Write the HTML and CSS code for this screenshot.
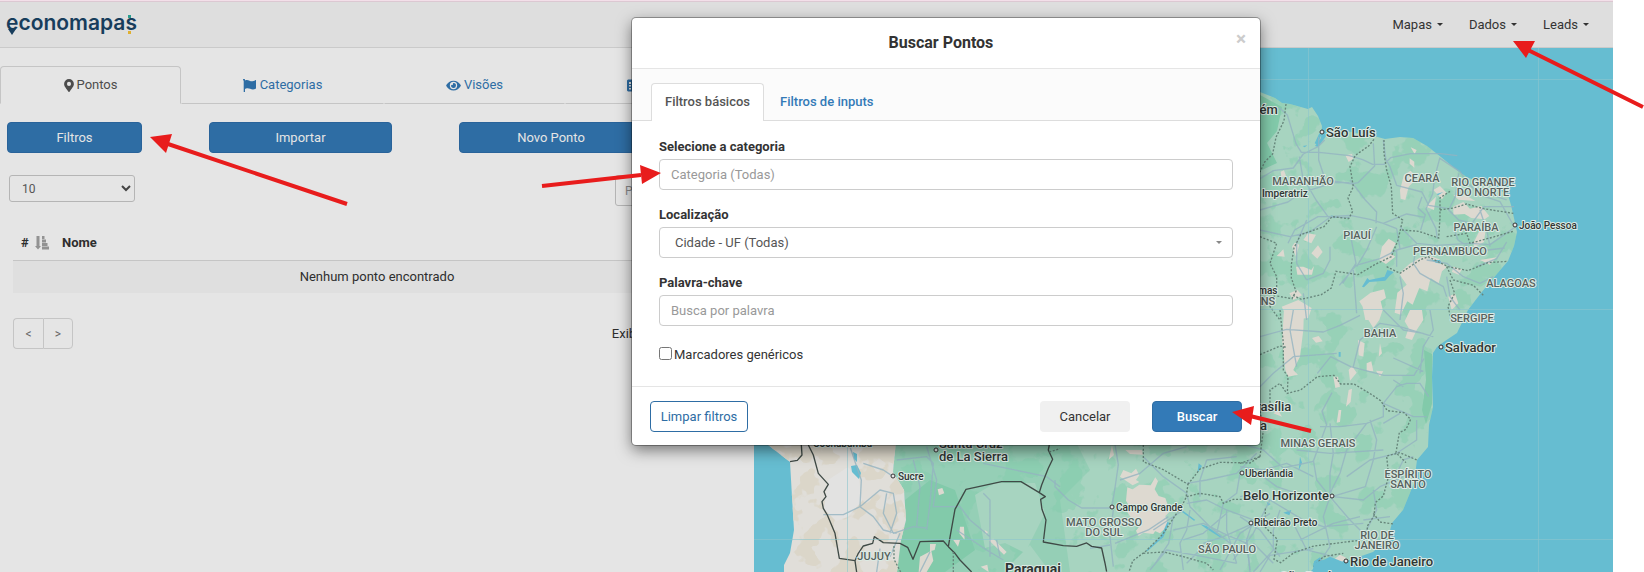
FILE: index.html
```html
<!DOCTYPE html>
<html lang="pt-BR">
<head>
<meta charset="utf-8">
<title>Economapas</title>
<link rel="stylesheet" href="styles.css">
</head>
<body>
<div class="app">
  <header class="navbar">
    <a class="brand" href="#" aria-label="economapas">
      <svg width="140" height="28" viewBox="0 0 140 28">
        <text class="brand-text" x="0" y="19">economapas</text>
        <path d="M2 18h8l-4 6z" fill="#173d5c"/>
        <path d="M122 4h3v3h-3z" fill="#2a9d8f"/>
        <path d="M122 20h3v3h-3z" fill="#e0b030"/>
      </svg>
    </a>
    <nav class="menu">
      <a href="#">Mapas <span class="caret"></span></a>
      <a href="#">Dados <span class="caret"></span></a>
      <a href="#">Leads <span class="caret"></span></a>
    </nav>
  </header>

  <main class="workspace">
    <section class="panel">
      <nav class="tabs">
        <a class="tab active" href="#"><svg width="10" height="13" viewBox="0 0 384 512"><path fill="currentColor" fill-rule="evenodd" d="M172 502C27 291 0 269 0 192a192 192 0 0 1 384 0c0 77-27 99-172 310a24 24 0 0 1-40 0zM192 272a80 80 0 1 0 0-160 80 80 0 0 0 0 160z"/></svg> Pontos</a>
        <a class="tab" href="#"><svg width="14" height="13" viewBox="0 0 14 13"><path fill="currentColor" d="M0 1a1 1 0 0 1 2-.3V1.400C5-.2 7 2.600 9.500 2.200 11 2 12 1.300 13 1v8.500c-4 2.400-6-.6-9-.2-.8.100-1.400.4-2 .7v3H.700V1.800z"/></svg> Categorias</a>
        <a class="tab" href="#"><svg width="15" height="13" viewBox="0 0 576 512"><path fill="currentColor" fill-rule="evenodd" d="M572 241C518 136 411 64 288 64S58 136 4 241a32 32 0 0 0 0 30c54 105 161 177 284 177s230-72 284-177a32 32 0 0 0 0-30zM288 400a144 144 0 1 1 0-288 144 144 0 0 1 0 288zm0-240a95 95 0 0 0-25 4 48 48 0 0 1-67 67 96 96 0 1 0 92-71z"/></svg> Visões</a>
        <a class="tab" href="#"><svg width="13" height="13" viewBox="0 0 13 13"><path fill="currentColor" fill-rule="evenodd" d="M1 .5h11l1 1v10l-1 1H1l-1-1v-10zM2 3v2h2V3zm3 0v1.500h6V3zM2 6v1.500h2V6zm3 0v1.500h6V6zM2 9v1.500h2V9zm3 0v1.500h6V9z"/></svg> Campos</a>
      </nav>
      <div class="actions">
        <button class="btn solid" type="button">Filtros</button>
        <button class="btn solid" type="button">Importar</button>
        <button class="btn solid" type="button">Novo Ponto</button>
      </div>
      <div class="list-tools">
        <div class="page-size">
          <select aria-label="Itens por página"><option>10</option></select>
          <svg width="10" height="7" viewBox="0 0 10 7"><path d="M1 1l4 4 4-4" fill="none" stroke="#444" stroke-width="2"/></svg>
        </div>
        <input class="search" type="text" placeholder="Pesquisar" aria-label="Pesquisar">
      </div>
      <table class="points">
        <thead>
          <tr>
            <th class="num"># <svg width="14" height="14" viewBox="0 0 14 14"><path fill="#929292" d="M1.500 0h3v10H6l-3 3.500L0 10h1.500zM7 0h2.500v3H7zM7 3.500h4V6.500H7zM7 7h5.500v3H7zM7 10.500h7V13.500H7z"/></svg></th>
            <th>Nome</th>
          </tr>
        </thead>
        <tbody>
          <tr><td colspan="2">Nenhum ponto encontrado</td></tr>
        </tbody>
      </table>
      <div class="pager">
        <div class="pages">
          <button type="button">&lt;</button><button type="button">&gt;</button>
        </div>
        <span class="summary">Exibindo 0 registros</span>
      </div>
    </section>

    <section class="map">
      <svg viewBox="754 48 859 524" preserveAspectRatio="xMinYMin slice">
        <defs>
          <clipPath id="east">
            <path d="M897 430L1200 80 1260 92 1275 98 1282 103 1290 104 1308 109 1312 107 1318 116 1322 126 1321 138 1315 146 1318 147 1324 139 1328 133 1345 131 1374 136 1385 139 1400 137 1413 138 1427 146 1441 157 1458 171 1468 178 1490 184 1508 195 1511 205 1514 218 1517 232 1514 246 1508 261 1496 275 1481 293 1468 310 1457 333 1445 341 1437 347 1433 353 1432 377 1433 407 1429 425 1428 447 1417 460 1414 483 1403 510 1392 523 1388 538 1373 552 1350 560 1333 561 1318 564 1310 572 895 572 901 540 906 520 904 490 893 472z"/>
          </clipPath>
          <clipPath id="andes">
            <path d="M754 430L897 430 893 472 904 490 906 520 901 540 897 572 784 572 784 565 790 553 794 530 792 497 790 462 768 445z"/>
          </clipPath>
          <filter id="forest" x="0" y="0" width="100%" height="100%" color-interpolation-filters="sRGB">
            <feTurbulence type="fractalNoise" baseFrequency=".035" numOctaves="4" seed="8"/>
            <feColorMatrix values="0 0 0 0 .5  0 0 0 0 .8  0 0 0 0 .67  22 0 0 0 -12"/>
          </filter>
          <filter id="dry" x="0" y="0" width="100%" height="100%" color-interpolation-filters="sRGB">
            <feTurbulence type="fractalNoise" baseFrequency=".05" numOctaves="3" seed="21"/>
            <feColorMatrix values="0 0 0 0 .86  0 0 0 0 .84  0 0 0 0 .79  22 0 0 0 -11"/>
          </filter>
        </defs>
        <rect class="sea" x="0" y="0" width="1700" height="600"/>
        <g clip-path="url(#east)">
          <rect class="land" x="880" y="60" width="680" height="520"/>
          <path class="wood" d="M890 430h180l20 40-30 30 10 72H890z"/>
          <rect x="890" y="80" width="640" height="492" filter="url(#forest)" opacity=".4"/>
          <path class="forest" d="M1260 95l22 12-5 24-10 12 10 20-17 8zM1424 350l8 4v50l-6 20-4-14 4-30z M905 500l25-20 25 10 20 60-30 22h-48z"/>
          <path class="land" d="M975 495l20-12 40 0 10 30-20 40-20-10-20 5zM1010 565l20-20 20 27z"/>
        </g>
        <g clip-path="url(#andes)">
          <rect class="plateau" x="750" y="430" width="160" height="150"/>
          <rect x="760" y="440" width="150" height="132" filter="url(#dry)"/>
          <path class="pale" d="M828 480l20-13 11 12 3 22-14 16-12 4-12-12z"/>
          <path class="sea" d="M851 466l6-1 4 8-2 6-7-7zM853 452l4 2v8l-3-3z"/>
        </g>

        <!-- dry clearings, north-east -->
        <g transform="translate(1240 80) scale(.3333)">
          <path class="sand" d="M512 202l18 8-6 12zM509 235l14 10v18l-14-12zM316 226l20-4 4 14-14 10zM480 330l12-46 20-12 12 12-4 22-14 14-10 40-14-4zM580 330l20-12 20 20-14 20zM558 380l30-30-6 40zM640 380l30-14 20 20 34-8 24 30-14 10-40-4-20-12-34 2zM700 490l20-40 16 6-4 30-30 16zM426 500l20-24 22 14-16 30 14 10-28 22-20-12zM478 580l30-28 34-20 30-4 26 10 22 24-14 12-10 36-24-16-10 40-24-10-20 50-16-10-20 40-18-6 8-60 28-24-14-20zM358 664l34-26 40-10 6 26-16 10 6 24-18 32h-34l-8-40zM625 650l20-10 10 30-20 20zM640 560l26 8-10 16-20-8zM720 540l50-8-20 22zM125 680l50-20 40 24-10 30-60 6zM148 640l24-10 14 16-26 14zM122 275l10-4 6 16-14 6zM156 500l8-12 14 6-10 36zM110 528l20-20 4 22zM190 480l14-20 24 4-14 26zM214 520l20-24 14 20-16 20zM168 560l22 0 24 10 8-12-6 26-44 0zM640 345l36 0 30 18-50-4z"/>
          <path class="water" d="M366 620l16-26 6 6 46-10 8-20 20 6-14 12-12 14-48 4-16 16zM224 190l14-30 6 4-12 30zM188 198l14-2-8 6zM590 342l20-6-16 10zM556 530l20 10 24 0 8 12-20-4zM272 406l20 6-10 3z"/>
          <path class="road" d="M60 85l60 0 22 20 26 86 16 26 54 0 90 10 40 12 30 14 34 0 20-20 60-12 90 0 50 6M60 296l40-24 60-8 30-42 44-22 20-20M236 170l0 70 20 60 84 12M60 390l84-24 40-28 100-30 44 0M178 230l10 60 40 70 36 50 66-4 60 12 40 12 70-28 54 10M400 190l4 68-50 50-20 4M330 300l46 60 34 36-2 34M60 450l90 20 60-14 60-44 60 0M144 490l20-40 70-40 40 0M430 180l8 60 12 20 20 56 76 20 20 40 60 10M600 232l-16 60-6 50-20 44 30 60 4 30M546 350l-12 34 22 20-14 46M600 235l60 40 20 30 40 40 60 20 40 70M656 280l-10 70-20 40 30 30 40 10 36-50 90 0M430 430l40 16 10 60-60 30-72 20-50 60M334 480l14 70-40 60M410 440l-30 70-30 50M480 440l50 50 60 6 100-6 60 4 80-56M470 560l0-50 60-16M530 500l-10 50 20 30 70 40 10 30M480 590l10 50-10 80M560 540l60 10 50 40 50 20 40-20M640 440l14 40 30 20 60 10 50-6M720 390l20 60 10 50M710 560l60-24 30-50M200 600l-30-50 0-60 30-70M200 600l50-20 20-40 0-40M340 570l10 130M190 640l10 80M620 590l10 60 30 40M740 340l60 20"/>
          <path class="border" d="M138 72l-6 50-24 50-10 50-24 24-14 30M402 178l-16 20-40 28-16 34 10 60-16 34 14 40-12 22-50-6-24 30-70 24-20 40-8 50 0 40 14 40-12 22-46-8M432 180l0 40 8 50 14 50 4 80 30 20-14 60-20 50-50 24-50 30-66-10-14 50-30 20-60 14-30-14M486 450l50 4 60 20 4-60 0-60 30-20M600 390l40-6 40-12 50 14 90 14M620 470l60-10 10 30 60-16 70-20M440 560l40 20 60-40 24-10 60 30 60 12 60-24 60-4M620 560l20 40 60 16 30 30M630 600l14 40-20 40 10 40M60 470l50 20-20 60 20 40 0 40-20 50 30 40"/>
        </g>

        <!-- centre and south-east -->
        <g transform="translate(1240 310) scale(.3333)">
          <path class="sand" d="M132 0l60 0-2 60-10 80-20 40 14 14-30 6-8-20-10-90zM372 0l56 0-10 30-18 24-16-26zM510 0l36 0 4 30-20 30-14 30-20-6 10-30-12-20zM354 90l20 10-4 40-14-4zM420 100l6 30-10 10zM380 160l14-6 6 30-20-2zM326 180l10-12 14 20-20 24zM408 182l22 2-10 16zM280 200l14 0 6 30-14 4zM326 240l10-4-4 40-14 14zM296 300l8 0-4 36-10 2zM100 310l14-10 12 20zM216 84l20-6 12 16-20 4zM280 750l20-16 20 10-16 14z"/>
          <path class="water" d="M180 440l6 18-10 24zM130 608l24-8-6 16zM80 576l12 6-8 5zM296 126l6 0 0 14-6 0zM222 754l18-12 16 20 30 6 4 18h-70z"/>
          <path class="road" d="M60 80l80-22 110 8 50-20 60-30M60 230l40-40 60-50 130-10M0 400l70 20 60 54 90-20 40-110-14-40 30-56M160 0l-10 60 20 110M232 190l40-50 60 30 100 26 90 0 30-50M340 170l20-80 60-50 60 10 100 30M430 0l60 60 60 10M570 0l10 60-30 50-10 80M460 144l90 40M430 280l40-50 30-10 40 0 26 40M430 280l90 40 40 0M430 280l0 40-50 20-80 10-60 0M490 230l-30-20M430 340l50-30M390 330l20 60-10 60-24 80-100 30M270 340l10 90-10 60 0 70M220 450l10 60 40 50M380 340l-60 80-20 70-30 60M430 420l-160 10-100-10M530 330l0 60-60 40-80 20-70 50M0 470l70 10 70-20 80 40M70 500l40 30 60 20 100 6M0 560l50-10 40 20 100 60 60 20 120-10M270 560l-20 60 20 90-40 60M270 560l60 70 60 60M280 560l90 10 50-40 70-30M400 540l10 60-30 60M120 600l-20 60 0 60-60 66M90 570l-50 100-60 80M0 620l60 40 60 80M60 786l30-50 130-20M160 640l40 80 80 20M30 786l-10-100M180 690l100-50 80-20M460 510l30-60 30-10M370 630l80-10"/>
          <path class="border" d="M60 134l60-26 20 4M120 0l10 100 0 80 14 20-2 50 40-10 50-40 50-4 20 26 40 0 50 30 30 20 20 30 50 6 20 20-14 30-20 10-10 60 30 30M530 450l-50-22-40 10 6 60-16 60-24 20-4 40-20 30 0 40-160 20-60 20-40 30-20-10 10-60-36-36 0-60M400 610l20 26 40 6M90 300l0-60 30-20 20 30M60 440l10-80-10-60M0 460l60-20M220 770l30-30 60-10"/>
        </g>

        <!-- south -->
        <g transform="translate(1040 430) scale(.3333)">
          <path class="sand" d="M250 120l24 10 14-14 10 20-10 14 10 6-20 10-20-14-18-12zM262 172l16 6 20-14 34 2 14-24 8 12-10 24 12 20 20 6 14 40-14 14 10 30-20 16-16-8-10 16-30-4-14 10-8-16 14-18-24-14-20-30 8-14-8-14zM296 270l20 4 16 14 24-10 14 22-10 10-30-14-24 4zM256 60l50 0 4 14-40-2zM216 45l6 30-16 14z"/>
          <path class="water" d="M318 362l44-42 20-44 6 2-18 44-26 22-22 20zM480 282l20 6 44 32-4 2-44-28zM426 240l40 30-4 2-36-26zM472 130l4-30 10 8zM820 400l30-10 20-10 40 16 50-4v34H820z"/>
          <path class="road" d="M45 150l0 20 40 40 40 24 90 0 10-60 10-70-10-60M240 150l60-20 70-60 70-20M220 240l-10 80 10 90M210 345l-60 10M225 340l100-40 60-40M310 80l60 60 70 50 10 40 60 60 60 50M440 220l60-10 60 30 80 30M400 260l-14 80-40 60M450 240l-10 60-20 40 10 80M400 300l90-20 60 30 70 30M430 330l60-20 70-60M560 240l0 60 30 100M600 130l-10 60-40 30-20 90M640 270l-20 60 10 90M440 160l60-10 90-20 60-60M500 90l-20 60 0 50M500 90l90-10M340 300l90-60M540 420l60-110 90-60M490 340l60-20 90-40M440 400l50-50M640 340l60 60M330 420l50-60 110 20 100 20"/>
          <path class="border" d="M310 45l0 50 60 24 74 44-6 40-10 20-60 90-50 50-40 30-10 30M310 370l60-4 60 14 70 20 20 20M444 163l36-46 60-20 90 2 34-22M440 200l40-10 60 10 10 20 30-12 80 0"/>
        </g>

        <!-- Bolivia, Chile and Paraguay -->
        <g transform="translate(740 430) scale(.3333)">
          <path class="sand" d="M593 178l14-4 6 16-16 6zM570 342l18 0-4 18-14 4zM540 380l34-18 6 30-20 34h-24zM660 290l12 0 2 40-16-20zM640 330l20 0-6 20zM746 330l14-4 40 40-8 8zM734 300l10 6-6 10zM722 410l20-6 4 22z"/>
          <path class="road" d="M330 50l20 60 14 40-4 80-50 24-60 0M360 230l40 30 30 40 40 10M370 100l60 20 30 20M360 230l60-50 40 10 10 60-20 60M440 190l-10 60 30 60 60-20 40 4M470 90l90-10 20 20-10 120-10 80M560 50l30 100-10 80 80 0 30 40 60 50M520 90l20 80-10 120M650 300l90 60 50 30M750 380l0-170-20-20M730 100l190 40M920 140l40 30M770 330l10 50M450 380l30-70M410 426l10-70M540 426l30-60"/>
          <path class="nation" d="M205 45l15 30 15 55 30 33-13 22 6 15-12 15 4 20 12 20 23 55 13 75 47 7 10-22 15-22 28-8 5-20 27 18 50 2 23 12 16 36 21-53 70-2 15 17 20-112 33-60 107-23h58l55 33 7-23 20-50 13-27-13-28 3-15M625 350l20 20 15 20 35 36M898 188l18 12-14 8 4 30 12 32-8 66 60 11 40 2 30-10 15 10 30 5 10 45 5 26M345 392l5 34M150 95l22-4 14-16-2-30"/>
          <path class="border" d="M462 348l0 40 20 38M640 366v60M928 66l32-10"/>
        </g>

        <path class="graticule" d="M754 79.500H1613M754 309.500H1613M754 539.500H1613M847.500 48V572M1308.500 48V572M1538.500 48V572"/>

        <g class="dots">
          <circle cx="1322" cy="132" r="2"/><circle cx="1515" cy="225" r="2"/><circle cx="1441" cy="347" r="2"/><circle cx="1242" cy="473" r="2"/><circle cx="1332" cy="496" r="2"/><circle cx="1251" cy="523" r="2"/><circle cx="1346" cy="561" r="2"/><circle cx="1112" cy="507" r="2"/><circle cx="893" cy="476" r="2"/><circle cx="936" cy="450" r="2"/>
        </g>
        <g class="state">
          <text x="1303" y="185">MARANHÃO</text><text x="1422" y="182">CEARÁ</text>
          <text x="1483" y="186">RIO GRANDE</text><text x="1483" y="196">DO NORTE</text>
          <text x="1357" y="239">PIAUÍ</text><text x="1476" y="231">PARAÍBA</text>
          <text x="1450" y="255">PERNAMBUCO</text><text x="1511" y="287">ALAGOAS</text>
          <text x="1245" y="305">TOCANTINS</text><text x="1472" y="322">SERGIPE</text>
          <text x="1380" y="337">BAHIA</text><text x="1318" y="447">MINAS GERAIS</text>
          <text x="1408" y="478">ESPÍRITO</text><text x="1408" y="488">SANTO</text>
          <text x="1377" y="539">RIO DE</text><text x="1377" y="549">JANEIRO</text>
          <text x="1227" y="553">SÃO PAULO</text><text x="1104" y="526">MATO GROSSO</text>
          <text x="1104" y="536">DO SUL</text><text x="874" y="560">JUJUY</text>
        </g>
        <g class="city">
          <text x="1241" y="114">Belém</text><text x="1326" y="137">São Luís</text>
          <text x="1445" y="352">Salvador</text><text x="1248" y="411">Brasília</text>
          <text x="1223" y="430">Goiânia</text><text x="1243" y="500">Belo Horizonte</text>
          <text x="1350" y="566">Rio de Janeiro</text><text x="1280" y="581">São Paulo</text>
          <text x="939" y="448">Santa Cruz</text><text x="939" y="461">de La Sierra</text>
        </g>
        <g class="town">
          <text x="1262" y="197">Imperatriz</text><text x="1519" y="229">João Pessoa</text>
          <text x="1244" y="294">Palmas</text><text x="1245" y="477">Uberlândia</text>
          <text x="1254" y="526">Ribeirão Preto</text><text x="1116" y="511">Campo Grande</text>
          <text x="898" y="480">Sucre</text><text x="813" y="447">Cochabamba</text>
        </g>
        <text class="country" x="1005" y="574">Paraguai</text>
      </svg>
    </section>
  </main>
</div>

<form class="modal" role="dialog" aria-labelledby="modal-title">
  <header class="modal-head">
    <h1 id="modal-title">Buscar Pontos</h1>
    <button class="close" type="button" aria-label="Fechar">×</button>
  </header>
  <nav class="modal-tabs">
    <a class="active" href="#">Filtros básicos</a>
    <a href="#">Filtros de inputs</a>
  </nav>
  <div class="modal-body">
    <div class="field">
      <label for="category">Selecione a categoria</label>
      <input id="category" type="text" placeholder="Categoria (Todas)">
    </div>
    <div class="field">
      <label for="place">Localização</label>
      <div class="picker">
        <select id="place"><option>Cidade - UF (Todas)</option></select>
        <span class="caret"></span>
      </div>
    </div>
    <div class="field">
      <label for="keyword">Palavra-chave</label>
      <input id="keyword" type="text" placeholder="Busca por palavra">
    </div>
    <label class="check"><input type="checkbox"><span>Marcadores genéricos</span></label>
  </div>
  <footer class="modal-foot">
    <button class="btn outline" type="button">Limpar filtros</button>
    <button class="btn muted" type="button">Cancelar</button>
    <button class="btn primary" type="submit">Buscar</button>
  </footer>
</form>

<svg class="arrows" viewBox="0 0 1644 572" preserveAspectRatio="xMinYMin meet" aria-hidden="true">
  <path class="shaft" d="M168 144L347 204M641 175L542 186M1528 50L1643 107M1250 416L1311 431"/>
  <path class="tip" d="M150 137l22-3-6 19zM661 173l-21-8 2 19zM1513 41h22l-9 17zM1232 412l22-6-3 19z"/>
</svg>
</body>
</html>
```
FILE: styles.css
```css
* { box-sizing: border-box; }

body {
  margin: 0;
  background: #fff;
  color: #2e2e2e;
  font: 13px/18px Roboto, "Liberation Sans", sans-serif;
  overflow: hidden;
}

a { color: #2e6da4; text-decoration: none; }
button, input, select { font: inherit; color: inherit; }

.app {
  display: flex;
  flex-direction: column;
  height: 100vh;
  margin-right: 31px;
  background: #e5e5e5;
  border-top: 1px solid #f3dfe9;
}

.navbar {
  display: flex;
  align-items: center;
  justify-content: space-between;
  height: 47px;
  flex: none;
  padding: 0 24px 0 6px;
  background: #dedede;
  border-top: 1px solid #dcc8d2;
  border-bottom: 1px solid #cacaca;
}
.brand { display: flex; }
.brand-text { font: 600 21px Inter, sans-serif; fill: #173d5c; }
.menu { display: flex; gap: 26px; }
.menu a { display: flex; align-items: center; gap: 5px; color: #333; }

.caret {
  width: 6px;
  border: 3px solid transparent;
  border-top-color: currentColor;
  border-bottom: 0;
}

.workspace {
  display: grid;
  grid-template-columns: 754fr 859fr;
  flex: 1;
  min-height: 0;
}

.panel { padding-top: 18px; min-width: 0; }
.tabs { display: grid; grid-template-columns: 181fr 203fr 181fr 189fr; }
.tab {
  display: flex;
  align-items: center;
  justify-content: center;
  gap: 3px;
  height: 38px;
  border: 1px solid transparent;
  border-bottom-color: #c5c5c5;
}
.tab.active {
  color: #4c4c4c;
  border-color: #c5c5c5;
  border-bottom-color: transparent;
  border-radius: 4px 4px 0 0;
}

.btn {
  height: 31px;
  border: 1px solid transparent;
  border-radius: 4px;
  padding: 0 8px;
  white-space: nowrap;
}
.solid { background: #2e6da4; border-color: #29639a; color: #e5e5e5; }

.actions {
  display: grid;
  grid-template-columns: 135fr 183fr 184fr;
  column-gap: 67px;
  padding: 18px 111px 0 7px;
}

.list-tools {
  display: flex;
  justify-content: space-between;
  align-items: flex-start;
  padding: 22px 13px 0 9px;
  font-size: 12px;
  color: #555;
}
.page-size { display: grid; align-items: center; width: 126px; }
.page-size > * { grid-area: 1 / 1; }
.page-size svg { justify-self: end; margin-right: 4px; pointer-events: none; }
.page-size select {
  appearance: none;
  height: 27px;
  padding: 0 12px;
  border: 1px solid #b5b5b5;
  border-radius: 3px;
  background: #e5e5e5;
}
.search {
  width: 126px;
  height: 31px;
  padding: 0 9px;
  border: 1px solid #b5b5b5;
  border-radius: 3px;
  background: #e5e5e5;
}
.search::placeholder { color: #888; opacity: 1; }

.points {
  width: calc(100% - 26px);
  margin: 20px 13px 0;
  border-collapse: collapse;
}
.points th {
  height: 34px;
  padding: 0 8px;
  text-align: left;
  font-weight: 700;
  border-bottom: 1px solid #c5c5c5;
}
.points .num { width: 41px; padding-right: 4px; white-space: nowrap; }
.points .num svg { margin-left: 3px; vertical-align: middle; }
.points td { height: 33px; padding: 0; text-align: center; background: #dfdfdf; }

.pager {
  display: flex;
  justify-content: space-between;
  align-items: center;
  padding: 25px 28px 0 13px;
}
.pages { display: flex; }
.pages button {
  width: 30px;
  height: 31px;
  padding: 0;
  border: 1px solid #c5c5c5;
  background: transparent;
  color: #666;
  font-size: 12px;
}
.pages button:first-child { border-radius: 4px 0 0 4px; border-right: 0; }
.pages button:last-child { border-radius: 0 4px 4px 0; }

.map { min-width: 0; min-height: 0; overflow: hidden; }
.map svg { display: block; width: 100%; height: 100%; }
.sea, .water { fill: #66bdd1; }
.land { fill: #a7d4c0; }
.wood { fill: #95cfb6; }
.forest { fill: #82caaa; }
.plateau { fill: #e0ded9; }
.pale { fill: #e2e2e1; }
.sand { fill: #ddd9d0; }
.road { fill: none; stroke: #93b3c0; stroke-width: 4; stroke-opacity: .8; stroke-linejoin: round; }
.border { fill: none; stroke: #66857a; stroke-width: 4; stroke-dasharray: 6 5; }
.nation { fill: none; stroke: #3f4a46; stroke-width: 4; stroke-linejoin: round; }
.graticule { fill: none; stroke: #8cc5cd; stroke-opacity: .6; }
.dots circle { fill: #e5e5e5; stroke: #333; }
.map text {
  font-family: Roboto, sans-serif;
  font-weight: 500;
  fill: #2f3634;
  stroke: #dcebe4;
  stroke-width: 2px;
  stroke-linejoin: round;
  paint-order: stroke;
}
.map .state text { font-size: 11px; text-anchor: middle; fill: #56615d; }
.map .city text { font-size: 13px; }
.map .town text { font-size: 10px; }
.map .country { font-size: 14px; font-weight: 700; }

.modal {
  position: absolute;
  top: 18px;
  left: 632px;
  width: 628px;
  background: #fff;
  border-radius: 4px;
  box-shadow: 0 0 0 1px rgba(0, 0, 0, .3), 0 5px 15px rgba(0, 0, 0, .5);
  color: #333;
}
.modal-head {
  display: flex;
  align-items: center;
  height: 51px;
  padding: 0 14px;
  border-bottom: 1px solid #e5e5e5;
}
.modal-head h1 { flex: 1; margin: 0; text-align: center; font-size: 16px; font-weight: 700; }
.close {
  align-self: flex-start;
  margin-top: 11px;
  padding: 0;
  border: 0;
  background: none;
  font-size: 19px;
  line-height: 19px;
  font-weight: 700;
  color: #ccc;
}
.modal-tabs {
  display: flex;
  gap: 2px;
  height: 52px;
  padding: 14px 19px 0;
  background: #fbfbfb;
  border-bottom: 1px solid #ddd;
}
.modal-tabs a {
  height: 38px;
  padding: 9px 13px;
  border: 1px solid transparent;
  border-bottom: 0;
  font-weight: 500;
  color: #337ab7;
}
.modal-tabs .active {
  color: #555;
  background: #fff;
  border-color: #ddd;
  border-radius: 4px 4px 0 0;
}
.modal-body { padding: 17px 27px 0; }
.field { display: grid; row-gap: 3px; margin-bottom: 16px; }
.field label { font-weight: 700; }
.field input, .field select {
  width: 100%;
  height: 31px;
  padding: 0 11px;
  border: 1px solid #ccc;
  border-radius: 4px;
  background: #fff;
  color: #555;
}
.field input::placeholder { color: #999; opacity: 1; }
.picker { display: grid; align-items: center; }
.picker > * { grid-area: 1 / 1; }
.field select { appearance: none; padding: 0 15px; }
.picker .caret { justify-self: end; margin-right: 11px; color: #888; pointer-events: none; }
.check { display: flex; gap: 2px; margin-top: 20px; }
.check input { width: 13px; height: 13px; margin: 1px 0 0; }
.modal-foot {
  display: flex;
  gap: 22px;
  margin-top: 22px;
  padding: 14px 18px 13px;
  border-top: 1px solid #e5e5e5;
}
.modal-foot .btn { width: 90px; }
.modal-foot .outline { width: 98px; margin-right: auto; background: #fff; border-color: #2e6da4; color: #2e6da4; }
.muted { background: #f0f0f0; color: #333; }
.primary { background: #337ab7; border-color: #2e6da4; color: #fff; font-weight: 500; }

.arrows { position: absolute; top: 0; left: 0; width: 100%; pointer-events: none; }
.shaft { fill: none; stroke: #e81c1c; stroke-width: 4; }
.tip { fill: #e81c1c; }
```
